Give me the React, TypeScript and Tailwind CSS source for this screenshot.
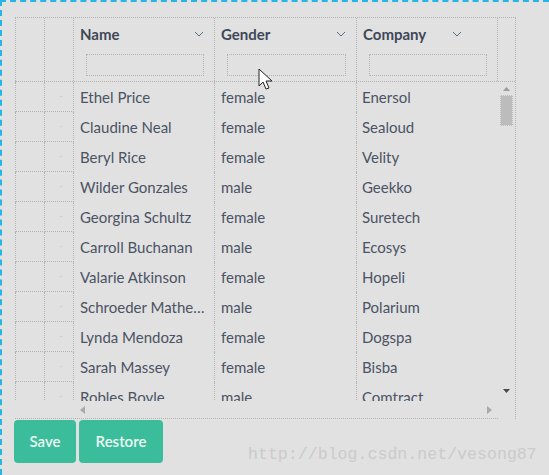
import React from "react";

const rows = [
  ["Ethel Price", "female", "Enersol"],
  ["Claudine Neal", "female", "Sealoud"],
  ["Beryl Rice", "female", "Velity"],
  ["Wilder Gonzales", "male", "Geekko"],
  ["Georgina Schultz", "female", "Suretech"],
  ["Carroll Buchanan", "male", "Ecosys"],
  ["Valarie Atkinson", "female", "Hopeli"],
  ["Schroeder Mathews", "male", "Polarium"],
  ["Lynda Mendoza", "female", "Dogspa"],
  ["Sarah Massey", "female", "Bisba"],
  ["Robles Boyle", "male", "Comtract"],
];

const Chevron = () => (
  <svg width="10" height="6" viewBox="0 0 10 6" className="text-[#5a6b7a]">
    <path d="M1 1l4 4 4-4" fill="none" stroke="currentColor" strokeWidth="1" />
  </svg>
);

const HeaderCell = ({ title, w, pr }: { title: string; w: string; pr: string }) => (
  <div className={`${w} shrink-0 h-full border-r border-dotted border-[#b4b4b4] flex flex-col`}>
    <div className={`flex items-center justify-between pl-[6px] ${pr} h-[32px]`}>
      <span className="text-[15px] font-bold text-[#3e4757]">{title}</span>
      <Chevron />
    </div>
    <div className="ml-[12px] mr-[10px] mt-[4px] h-[22px] border border-dotted border-[#b4b4b4]" />
  </div>
);

const App: React.FC = () => {
  return (
    <div
      className="relative w-[549px] h-[475px] overflow-hidden bg-[#e1e1e1] border-t-2 border-l-2 border-dashed border-[#27b5e6]"
      style={{ fontFamily: "Lato, 'Open Sans', sans-serif" }}
    >
      {/* Grid */}
      <div className="ml-[13px] mt-[15px] w-[501px] h-[402px] border-t border-r border-dotted border-[#b4b4b4] flex flex-col">
        {/* Header */}
        <div className="flex h-[64px] shrink-0 border-b border-dotted border-[#b4b4b4]">
          <div className="w-[30px] shrink-0 border-l border-r border-dotted border-[#b4b4b4]" />
          <div className="w-[29px] shrink-0 border-r border-dotted border-[#b4b4b4]" />
          <HeaderCell title="Name" w="w-[141px]" pr="pr-[10px]" />
          <HeaderCell title="Gender" w="w-[142px]" pr="pr-[10px]" />
          <HeaderCell title="Company" w="w-[141px]" pr="pr-[35px]" />
          <div className="flex-1" />
        </div>

        {/* Body */}
        <div className="flex flex-1 min-h-0">
          <div className="flex flex-col w-[483px] shrink-0">
            <div className="h-[319px] overflow-hidden flex flex-col">
              {rows.map((r, i) => (
                <div key={i} className="flex h-[30px] shrink-0">
                  <div className="w-[30px] shrink-0 border-l border-r border-b border-dotted border-[#b4b4b4]" />
                  <div className="w-[29px] shrink-0 border-r border-b border-dotted border-[#b4b4b4] flex items-center justify-center">
                    <span className="w-[2px] h-[1px] bg-[#c8cfcc] ml-[4px]" />
                  </div>
                  <div className="w-[141px] shrink-0 border-r border-dotted border-[#b4b4b4] flex items-center pl-[6px] pr-[6px] text-[15px] text-[#4b5364] whitespace-nowrap overflow-hidden">
                    <span className="truncate">{r[0]}</span>
                  </div>
                  <div className="w-[142px] shrink-0 border-r border-dotted border-[#b4b4b4] flex items-center pl-[6px] text-[15px] text-[#4b5364]">
                    {r[1]}
                  </div>
                  <div className="w-[141px] shrink-0 flex items-center pl-[5px] text-[15px] text-[#4b5364]">
                    {r[2]}
                  </div>
                </div>
              ))}
            </div>
            {/* Horizontal scrollbar */}
            <div className="h-[18px] flex items-center border-b border-dotted border-[#b4b4b4]">
              <div className="w-[59px] shrink-0 h-full" />
              <svg width="5" height="8" viewBox="0 0 5 8" className="ml-[6px]">
                <path d="M5 0L0 4l5 4z" fill="#a9a9a9" />
              </svg>
              <div className="flex-1" />
              <svg width="5" height="8" viewBox="0 0 5 8" className="mr-[6px]">
                <path d="M0 0l5 4-5 4z" fill="#a9a9a9" />
              </svg>
            </div>
          </div>
          {/* Vertical scrollbar */}
          <div className="flex-1 flex flex-col items-center pt-[5px] pb-[24px]">
            <svg width="7" height="4" viewBox="0 0 7 4">
              <path d="M3.5 0L7 4H0z" fill="#9d9d9d" />
            </svg>
            <div className="mt-[4px] w-[13px] h-[31px] bg-[#bcbcbc] border border-dotted border-[#e1e1e1]" />
            <div className="flex-1" />
            <svg width="7" height="4" viewBox="0 0 7 4" className="mb-[2px]">
              <path d="M0 0h7L3.5 4z" fill="#4a4a4a" />
            </svg>
          </div>
        </div>
      </div>

      {/* Buttons */}
      <div className="flex gap-[3px] ml-[12px] mt-[1px]">
        <button className="w-[62px] h-[43px] rounded-[4px] bg-[#3bbd9b] text-[#eef8f3] text-[15px] font-semibold">
          Save
        </button>
        <button className="w-[84px] h-[43px] rounded-[4px] bg-[#3bbd9b] text-[#eef8f3] text-[15px] font-semibold">
          Restore
        </button>
      </div>

      {/* Watermark */}
      <div
        className="absolute left-[246px] top-[441px] text-[16.6px] text-[#cbcbcb] whitespace-nowrap"
        style={{ fontFamily: "'Liberation Mono', monospace" }}
      >
        http://blog.csdn.net/vesong87
      </div>

      {/* Mouse cursor */}
      <svg className="absolute left-[256px] top-[66px]" width="16" height="24" viewBox="0 0 16 24">
        <path d="M1 1v17l4-4 3 7 3-1-3-7h6z" fill="#ffffff" stroke="#222" strokeWidth="1" strokeLinejoin="miter" />
      </svg>
    </div>
  );
};

export default App;
